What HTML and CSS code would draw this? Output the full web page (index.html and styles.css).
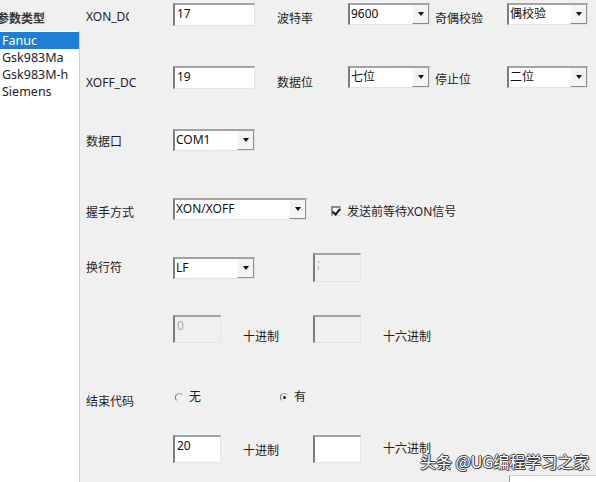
FILE: index.html
```html
<!DOCTYPE html>
<html lang="zh-CN">

<head>
    <meta charset="UTF-8">
    <title>通讯参数</title>
    <link rel="stylesheet" href="styles.css">
</head>

<body>
    <div class="window">
        <!-- 左侧系统列表 -->
        <aside class="side">
            <div class="side-title">参数类型</div>
            <ul class="list">
                <li class="active">Fanuc</li>
                <li>Gsk983Ma</li>
                <li>Gsk983M-h</li>
                <li>Siemens</li>
            </ul>
        </aside>

        <!-- 参数表单 -->
        <main class="form">
            <div class="row row1">
                <span class="lbl lbl-clip p6">XON_DC</span>
                <div class="edit w82">17</div>
                <span class="lbl2 p8">波特率</span>
                <div class="combo w82"><span>9600</span><i class="arrow"></i></div>
                <span class="lbl3 p8">奇偶校验</span>
                <div class="combo w81"><span>偶校验</span><i class="arrow"></i></div>
            </div>

            <div class="row row2">
                <span class="lbl p9">XOFF_DC</span>
                <div class="edit w82">19</div>
                <span class="lbl2 p9">数据位</span>
                <div class="combo w82"><span>七位</span><i class="arrow"></i></div>
                <span class="lbl3 p6">停止位</span>
                <div class="combo w81"><span>二位</span><i class="arrow"></i></div>
            </div>

            <div class="row row3">
                <span class="lbl p5">数据口</span>
                <div class="combo w82"><span>COM1</span><i class="arrow"></i></div>
            </div>

            <div class="row row4">
                <span class="lbl p7">握手方式</span>
                <div class="combo w134"><span>XON/XOFF</span><i class="arrow"></i></div>
                <label class="check p6"><i class="box"></i>发送前等待XON信号</label>
            </div>

            <div class="row row5">
                <span class="lbl p7">换行符</span>
                <div class="combo w82 down4"><span>LF</span><i class="arrow"></i></div>
                <div class="edit off w48 tall sep58">;</div>
            </div>

            <div class="row row6">
                <span class="lbl"></span>
                <div class="edit off w48 tall">0</div>
                <span class="unit p14">十进制</span>
                <div class="edit off w48 tall"></div>
                <span class="unit p14">十六进制</span>
            </div>

            <div class="row row7">
                <span class="lbl p6">结束代码</span>
                <label class="radio first"><i class="dot"></i>无</label>
                <label class="radio on"><i class="dot"></i>有</label>
            </div>

            <div class="row row8">
                <span class="lbl"></span>
                <div class="edit w48 tall">20</div>
                <span class="unit p8">十进制</span>
                <div class="edit w48 tall"></div>
                <span class="unit p6">十六进制</span>
            </div>

            <div class="row row9">
                <div class="stub"></div>
            </div>
        </main>

        <div class="watermark">头条 @UG编程学习之家</div>
    </div>
</body>

</html>
```

FILE: styles.css
```css
body {
    margin: 0;
    background-color: #f0f0f0;
    font-family: "Noto Sans", "Noto Sans CJK SC", sans-serif;
    font-size: 12px;
    line-height: 16px;
    color: #1e1e1e;
}

.window {
    position: relative;
    display: flex;
    width: 596px;
    height: 482px;
    overflow: hidden;
}

/* left list */
.side {
    width: 80px;
    display: flex;
    flex-direction: column;
}

.side-title {
    height: 31px;
    padding-top: 10px;
    box-sizing: border-box;
    margin-left: -3px;
    font-family: "Noto Sans CJK SC", sans-serif;
    font-size: 12px;
    font-weight: bold;
    color: #333;
}

.list {
    flex: 1;
    margin: 0;
    padding: 1px 0 0 0;
    list-style: none;
    background-color: #fff;
    border-right: 1px solid #cfcfcf;
    font-size: 12.5px;
    line-height: 17px;
}

.list li {
    padding-left: 2px;
    color: #222;
}

.list .active {
    background-color: #1f7fd6;
    color: #fff;
}

/* form */
.form {
    flex: 1;
    padding-left: 6px;
}

.row {
    display: flex;
    align-items: flex-start;
}

.row1 { margin-top: 3px; height: 23px; }
.row2 { margin-top: 40px; height: 23px; }
.row3 { margin-top: 40px; height: 22px; }
.row4 { margin-top: 47px; height: 22px; }
.row5 { margin-top: 33px; height: 29px; }
.row6 { margin-top: 33px; height: 28px; }
.row7 { margin-top: 45px; height: 20px; }
.row8 { margin-top: 27px; height: 28px; }
.row9 { margin-top: 12px; justify-content: flex-end; }

.lbl {
    width: 87px;
    flex-shrink: 0;
    white-space: nowrap;
}

.lbl-clip {
    width: 43px;
    margin-right: 44px;
    overflow: hidden;
}

.lbl2 {
    width: 71px;
    margin-left: 22px;
}

.lbl3 {
    width: 72px;
    margin-left: 5px;
}

.unit {
    width: 70px;
    margin-left: 22px;
    white-space: nowrap;
}

.p5 { padding-top: 5px; }
.p6 { padding-top: 6px; }
.p7 { padding-top: 7px; }
.p8 { padding-top: 8px; }
.p9 { padding-top: 9px; }
.p14 { padding-top: 14px; }

/* sunken edit box */
.edit {
    height: 23px;
    box-sizing: border-box;
    padding: 1px 0 0 2px;
    background-color: #fff;
    border-top: 2px solid #a3a3a3;
    border-left: 2px solid #7c7c7c;
    border-right: 1px solid #e4e4e4;
    border-bottom: 1px solid #e4e4e4;
    color: #111;
}

.edit.tall {
    height: 28px;
}

.edit.off {
    background-color: #f0f0f0;
    color: #a8a8a8;
}

.row5 .edit.off {
    height: 29px;
}

.sep58 { margin-left: 58px; }
.down4 { margin-top: 4px; }

.w48 { width: 48px; }
.w81 { width: 81px; }
.w82 { width: 82px; }
.w134 { width: 134px; }

/* combo box */
.combo {
    height: 22px;
    box-sizing: border-box;
    display: flex;
    background-color: #fff;
    border-top: 2px solid #a3a3a3;
    border-left: 2px solid #7c7c7c;
    border-right: 1px solid #e4e4e4;
    border-bottom: 1px solid #e4e4e4;
    color: #111;
}

.combo span {
    flex: 1;
    padding: 1px 0 0 1px;
}

.combo .arrow {
    width: 17px;
    box-sizing: border-box;
    background-color: #f4f4f4;
    border-right: 1px solid #8c8c8c;
    border-bottom: 1px solid #8c8c8c;
    border-left: 1px solid #fdfdfd;
    display: flex;
    align-items: center;
    justify-content: center;
}

.combo .arrow::after {
    content: "";
    border-left: 3.5px solid transparent;
    border-right: 3.5px solid transparent;
    border-top: 4px solid #111;
}

/* checkbox */
.check {
    display: flex;
    align-items: flex-start;
    margin-left: 24px;
    white-space: nowrap;
}

.check .box {
    width: 10px;
    height: 10px;
    margin: 2px 6px 0 0;
    box-sizing: border-box;
    background-color: #fff;
    border-top: 2px solid #8a8a8a;
    border-left: 2px solid #8a8a8a;
    border-right: 1px solid #dedede;
    border-bottom: 1px solid #dedede;
    position: relative;
}

.check .box::after {
    content: "";
    position: absolute;
    left: 1px;
    top: -1px;
    width: 3px;
    height: 6px;
    border-right: 2px solid #111;
    border-bottom: 2px solid #111;
    transform: rotate(40deg);
}

/* radios */
.radio {
    display: flex;
    align-items: center;
    padding-top: 1px;
    white-space: nowrap;
}

.radio.first {
    margin-left: 2px;
    width: 105px;
}

.radio .dot {
    width: 9px;
    height: 9px;
    margin-right: 5px;
    box-sizing: border-box;
    border-radius: 50%;
    border-left: 1.5px solid #707070;
    border-top: 1px solid #a0a0a0;
    border-right: 1px solid transparent;
    border-bottom: 1px solid transparent;
    position: relative;
}

.radio.on .dot::after {
    content: "";
    position: absolute;
    left: 2px;
    top: 2px;
    width: 3px;
    height: 3px;
    border-radius: 50%;
    background-color: #111;
}

.stub {
    width: 86px;
    height: 12px;
    background-color: #fff;
    border-left: 1px solid #9a9a9a;
    border-top: 1px solid #d0d0d0;
}

/* watermark over the window */
.watermark {
    position: absolute;
    left: 420px;
    top: 451px;
    font-family: "Noto Sans CJK SC", sans-serif;
    font-size: 16px;
    line-height: 20px;
    color: #fff;
    white-space: nowrap;
    text-shadow: -1px 0 #444, 1px 0 #444, 0 -1px #444, 0 1px #444, 1px 1px #555;
}
```
